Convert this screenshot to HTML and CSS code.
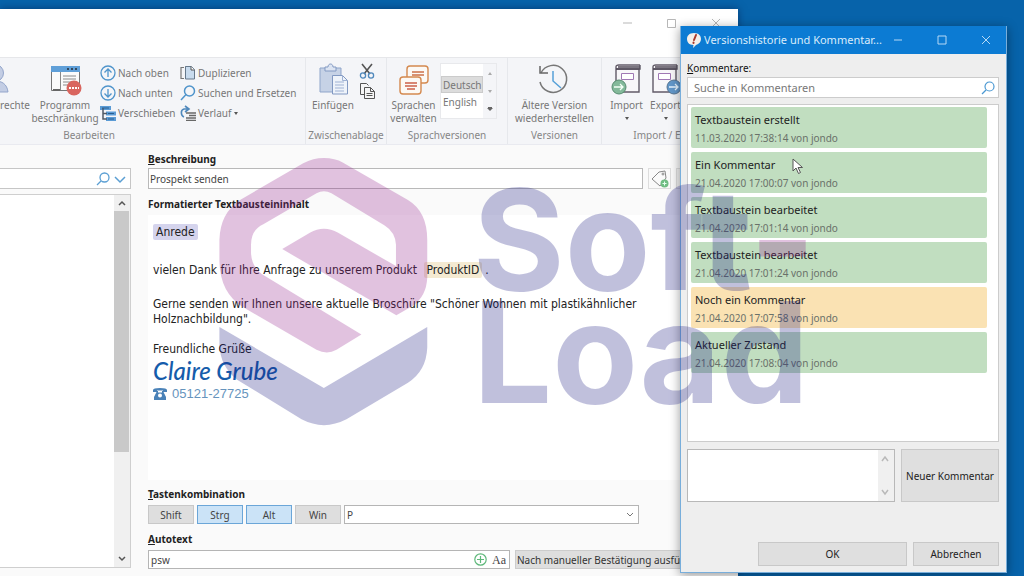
FILE: index.html
```html
<!DOCTYPE html>
<html lang="de">
<head>
<meta charset="utf-8">
<title>Versionshistorie und Kommentare</title>
<link rel="stylesheet" href="styles.css">
</head>
<body>
<main class="desktop">
  <section class="window main-window" aria-label="Textbausteine">
    <header class="main-title">
      <button class="caption-btn" aria-label="Minimieren"><svg width="10" height="10" viewBox="0 0 10 10"><path d="M0 5h9"/></svg></button>
      <button class="caption-btn" aria-label="Maximieren"><svg width="10" height="10" viewBox="0 0 10 10"><path d="M.5 1.500h8v8h-8z"/></svg></button>
      <button class="caption-btn" aria-label="Schließen"><svg width="10" height="10" viewBox="0 0 10 10"><path d="M1 1l8 8M9 1l-8 8"/></svg></button>
    </header>

    <nav class="ribbon" aria-label="Menüband">
      <div class="group group-edit">
        <div class="group-tools tools-end">
          <button class="big-tool rights-tool">
            <svg width="36" height="34" viewBox="0 0 36 34"><g fill="#c3cde4" stroke="#93a5cb"><circle cx="14" cy="10" r="8.500"/><path d="M1 29c1-8 6-11 13-11s12 3 13 11z"/></g></svg>
            <span>rechte</span>
          </button>
          <button class="big-tool program-tool">
            <svg width="34" height="34" viewBox="0 0 34 34"><path d="M3.500 3.500h28v24h-28z" fill="#fbfbfb" stroke="#767676"/><path d="M3 3h29v6H3z" fill="#5f9fd8"/><path d="M19 6h2M23 6h2M27 6h2" stroke="#34495e" stroke-width="2"/><path d="M12.500 9v18M15 13h13M15 16h13M15 19h9M15 22h6" stroke="#8a8a8a"/><path d="M5 27h7" stroke="#666" stroke-width="2"/><circle cx="26" cy="25" r="7.500" fill="#d9655f"/><path d="M21 25h10" stroke="#fff" stroke-width="2" stroke-dasharray="2 1"/></svg>
            <span>Programm<br>beschränkung</span>
          </button>
          <div class="tool-rows rows-move">
            <button class="row-tool"><svg width="16" height="16" viewBox="0 0 16 16" fill="none" stroke="#4f94cb" stroke-width="1.300"><circle cx="8" cy="8" r="7"/><path d="M8 12V4M4.500 7.500L8 4l3.500 3.500"/></svg>Nach oben</button>
            <button class="row-tool"><svg width="16" height="16" viewBox="0 0 16 16" fill="none" stroke="#4f94cb" stroke-width="1.300"><circle cx="8" cy="8" r="7"/><path d="M8 4v8M4.500 8.500L8 12l3.500-3.500"/></svg>Nach unten</button>
            <button class="row-tool"><svg width="16" height="16" viewBox="0 0 16 16"><path d="M0 1h11v4H0zM6 6.500h10v4H6zM6 12h10v4H6z" fill="#5b9bd5"/><path d="M3 3v11h4M3 8.500h4" stroke="#505a66" stroke-width="1.500" fill="none"/><path d="M2 3h7M8 8.500h6M8 14h6" stroke="#295f91"/></svg>Verschieben</button>
          </div>
          <div class="tool-rows rows-copy">
            <button class="row-tool"><svg width="16" height="16" viewBox="0 0 16 16"><path d="M4 2.500H1v11h3M6 1v11" stroke="#777" fill="none" stroke-width="1.200"/><path d="M5.500 1.500h6l3 3v9.500h-9z" fill="#c8dbee" stroke="#66798c"/><path d="M11 1.500V5h3.500" fill="#fff" stroke="#555"/></svg>Duplizieren</button>
            <button class="row-tool"><svg width="16" height="16" viewBox="0 0 16 16" fill="none" stroke="#4f94cb" stroke-width="1.500"><circle cx="9.500" cy="6" r="5"/><path d="M6 9.500L1 15"/></svg>Suchen und Ersetzen</button>
            <button class="row-tool"><svg width="16" height="16" viewBox="0 0 16 16" fill="none"><path d="M4 12C1 11 0 5 4 4h4M5 1l4 3-4 3" stroke="#4f88bc" stroke-width="1.600"/><path d="M6 8h10M9 10.500h7M6 13h10M6 15.300h10" stroke="#686868" stroke-width="1.300"/></svg>Verlauf <i class="drop"></i></button>
          </div>
        </div>
        <span class="group-name edit-name">Bearbeiten</span>
      </div>

      <div class="group group-clip">
        <div class="group-tools">
          <button class="big-tool paste-tool">
            <svg width="34" height="34" viewBox="0 0 34 34"><path d="M4 5h21v24H4z" fill="#c6d2e6" stroke="#8fa5ca"/><path d="M9 8V4h3c0-4 5-4 5 0h3v4z" fill="#dce4f2" stroke="#8299c2"/><path d="M16.500 12.500h10l5 5V31h-15z" fill="#eef3fa" stroke="#8299c2"/><path d="M26.500 12.500v5h5M19 19h9M19 22h9M19 25h9M19 28h9" fill="none" stroke="#9fb2d4"/></svg>
            <span>Einfügen</span>
          </button>
          <div class="clip-side">
            <button class="icon-tool" aria-label="Ausschneiden"><svg width="16" height="17" viewBox="0 0 16 17" fill="none"><path d="M3 1l8 10M13 1L5 11" stroke="#555" stroke-width="1.600"/><circle cx="4" cy="12.500" r="2.600" stroke="#4f88bc" stroke-width="1.300"/><circle cx="12" cy="12.500" r="2.600" stroke="#4f88bc" stroke-width="1.300"/></svg></button>
            <button class="icon-tool" aria-label="Kopieren"><svg width="16" height="16" viewBox="0 0 16 16" fill="#f6f6f6" stroke="#555"><path d="M5 11.500H1.500v-11h6l2 2"/><path d="M5.500 4.500h6l4 4v7h-10zM11.500 4.500v4h4M7.500 10.500h6M7.500 12.500h6"/></svg></button>
          </div>
        </div>
        <span class="group-name">Zwischenablage</span>
      </div>

      <div class="group group-lang">
        <div class="group-tools">
          <button class="big-tool lang-tool">
            <svg width="32" height="34" viewBox="0 0 32 34" fill="#fcf9f5" stroke="#d4894f" stroke-width="1.400"><rect x="9" y="3" width="21" height="17" rx="3"/><path d="M14 9h12M14 12h12" stroke="#cc7048"/><rect x="2" y="14" width="21" height="17" rx="3"/><path d="M7 20h12M7 23h12M9 26h8" stroke="#cc6048"/></svg>
            <span>Sprachen<br>verwalten</span>
          </button>
          <div class="gallery">
            <ul class="languages"><li class="chosen">Deutsch</li><li>English</li></ul>
            <div class="gallery-steps"><i class="step-up"></i><i class="step-down"></i><i class="step-more"></i></div>
          </div>
        </div>
        <span class="group-name">Sprachversionen</span>
      </div>

      <div class="group group-version">
        <div class="group-tools tools-center">
          <button class="big-tool">
            <svg width="34" height="34" viewBox="0 0 34 34" fill="none"><path d="M4 10a13.500 13.500 0 1 1-1 9" stroke="#777" stroke-width="1.500"/><path d="M3 3v7h8" stroke="#666" stroke-width="1.500"/><path d="M16 8v10l8 7" stroke="#55a0d8" stroke-width="1.500"/></svg>
            <span>Ältere Version<br>wiederherstellen</span>
          </button>
        </div>
        <span class="group-name">Versionen</span>
      </div>

      <div class="group group-io">
        <div class="group-tools">
          <button class="big-tool io-tool">
            <svg width="32" height="34" viewBox="0 0 32 34"><path d="M5 6V4q0-2 3-2h21M5 6v23h23V6z" fill="#f8f7f9" stroke="#615b68" stroke-width="1.400"/><path d="M5 6h24V2M7 4h22" stroke="#514b58" fill="none" stroke-width="1.300"/><path d="M10.500 10.500h12v6h-12z" fill="#fff" stroke="#a078b4"/><circle cx="8" cy="24" r="7" fill="#83b99a" stroke="#578c70"/><path d="M3 24h9M9 21l3 3-3 3" stroke="#f4fff6" fill="none" stroke-width="1.300"/></svg>
            <span>Import</span><i class="drop"></i>
          </button>
          <button class="big-tool io-tool">
            <svg width="32" height="34" viewBox="0 0 32 34"><path d="M3 6V4q0-2 3-2h21M3 6v23h23V6z" fill="#f8f7f9" stroke="#615b68" stroke-width="1.400"/><path d="M3 6h24V2M5 4h22" stroke="#514b58" fill="none" stroke-width="1.300"/><path d="M8.500 10.500h12v6h-12z" fill="#fff" stroke="#a078b4"/><circle cx="24" cy="24" r="7" fill="#6297c9" stroke="#587592"/><path d="M19 24h9M25 21l3 3-3 3" stroke="#e8f5ff" fill="none" stroke-width="1.300"/></svg>
            <span>Export</span><i class="drop"></i>
          </button>
        </div>
        <span class="group-name">Import / Export</span>
      </div>
    </nav>

    <div class="workspace">
      <aside class="tree">
        <div class="tree-search">
          <input type="search" aria-label="Textbausteine suchen">
          <svg width="14" height="14" viewBox="0 0 14 14" fill="none" stroke="#5b9fd3" stroke-width="1.300"><circle cx="8.500" cy="5.500" r="4.500"/><path d="M5 9l-4 4"/></svg>
          <svg width="12" height="14" viewBox="0 0 12 14" fill="none" stroke="#5b9fd3" stroke-width="1.500"><path d="M1 5l5 5 5-5"/></svg>
        </div>
        <div class="tree-list">
          <div class="scrollbar">
            <svg width="15" height="16" viewBox="0 0 15 16"><path d="M5 10l3-3 3 3"/></svg>
            <span class="thumb"></span>
            <svg class="scroll-end" width="15" height="16" viewBox="0 0 15 16"><path d="M5 6l3 3 3-3"/></svg>
          </div>
        </div>
      </aside>

      <form class="details">
        <label class="field-label" for="desc"><u>B</u>eschreibung</label>
        <div class="desc-row">
          <input id="desc" class="text-box" type="text" value="Prospekt senden">
          <button type="button" class="tag-btn" aria-label="Schlagwort hinzufügen"><svg width="20" height="18" viewBox="0 0 20 18" fill="none" stroke="#888"><path d="M2 9l7-7 6-1 1 7-6 8z"/><circle cx="13" cy="4" r="1"/><circle cx="14.500" cy="13.500" r="4" fill="#6fbd83" stroke="none"/><path d="M12.500 13.500h4M14.500 11.500v4" stroke="#e8fff0"/></svg></button>
          <button type="button" class="more-btn" aria-label="Schlagwörter"></button>
        </div>
        <span class="field-label content-label">Formatierter Textbausteininhalt</span>
        <article class="editor">
          <p><span class="token token-blue">Anrede</span></p>
          <p class="thanks">vielen Dank für Ihre Anfrage zu unserem Produkt <span class="token token-sand">ProduktID</span>.</p>
          <p class="offer">Gerne senden wir Ihnen unsere aktuelle Broschüre "Schöner Wohnen mit plastikähnlicher Holznachbildung".</p>
          <p>Freundliche Grüße</p>
          <p class="signature">Claire Grube</p>
          <p class="phone"><svg width="14" height="12" viewBox="0 0 14 12"><path d="M0 4V2q0-2 7-2t7 2v2h-4V2.500H4V4z" fill="#4a82b8"/><path d="M4 3h1v1.500h4V3h1l3 6v3H1V9z" fill="#4a82b8"/><circle cx="7" cy="7.500" r="2" fill="#fff"/></svg>05121-27725</p>
        </article>
        <span class="field-label"><u>T</u>astenkombination</span>
        <div class="key-row">
          <button type="button" class="key">Shift</button>
          <button type="button" class="key key-on" aria-pressed="true">Strg</button>
          <button type="button" class="key key-on" aria-pressed="true">Alt</button>
          <button type="button" class="key">Win</button>
          <select class="key-select" aria-label="Taste"><option>P</option></select>
        </div>
        <label class="field-label auto-label" for="auto"><u>A</u>utotext</label>
        <div class="auto-row">
          <div class="auto-box">
            <input id="auto" type="text" value="psw">
            <svg width="13" height="13" viewBox="0 0 13 13" fill="none" stroke="#5fb87b" stroke-width="1.200"><circle cx="6.500" cy="6.500" r="5.700"/><path d="M3 6.500h7M6.500 3v7"/></svg>
            <span class="case">Aa</span>
          </div>
          <button type="button" class="confirm">Nach manueller Bestätigung ausführen</button>
        </div>
      </form>
    </div>
  </section>

  <section class="window dialog" role="dialog" aria-labelledby="dialog-title">
    <header class="dialog-title">
      <svg width="16" height="16" viewBox="0 0 16 16"><path d="M8 1c5 0 7 3 7 6s-2 5-5 6l-3 3 .500-3C3 13 1 10 1 7s2-6 7-6z" fill="#f6efe8"/><path d="M10 3L8 8M7.500 10.500v.5" stroke="#a8382a" stroke-width="2" stroke-linecap="round"/></svg>
      <h1 id="dialog-title">Versionshistorie und Kommentar...</h1>
      <button class="caption-btn" aria-label="Minimieren"><svg width="10" height="10" viewBox="0 0 10 10"><path d="M1 5h8"/></svg></button>
      <button class="caption-btn" aria-label="Maximieren"><svg width="10" height="10" viewBox="0 0 10 10"><path d="M1 1h8v8H1z"/></svg></button>
      <button class="caption-btn" aria-label="Schließen"><svg width="10" height="10" viewBox="0 0 10 10"><path d="M1 1l8 8M9 1l-8 8"/></svg></button>
    </header>
    <div class="dialog-body">
      <label class="comments-label" for="comment-search"><u>K</u>ommentare:</label>
      <div class="comment-search">
        <input id="comment-search" type="text" placeholder="Suche in Kommentaren">
        <svg width="14" height="14" viewBox="0 0 14 14" fill="none" stroke="#4a98d2" stroke-width="1.200"><circle cx="8.500" cy="5.500" r="4.500"/><path d="M5 9l-4 4"/></svg>
      </div>
      <ul class="comments">
        <li class="comment"><b>Textbaustein erstellt</b><span>11.03.2020 17:38:14 von jondo</span></li>
        <li class="comment"><b>Ein Kommentar</b><span>21.04.2020 17:00:07 von jondo</span></li>
        <li class="comment"><b>Textbaustein bearbeitet</b><span>21.04.2020 17:01:14 von jondo</span></li>
        <li class="comment"><b>Textbaustein bearbeitet</b><span>21.04.2020 17:01:24 von jondo</span></li>
        <li class="comment comment-note"><b>Noch ein Kommentar</b><span>21.04.2020 17:07:58 von jondo</span></li>
        <li class="comment"><b>Aktueller Zustand</b><span>21.04.2020 17:08:04 von jondo</span></li>
      </ul>
      <div class="new-row">
        <div class="new-box">
          <textarea aria-label="Neuer Kommentar"></textarea>
          <div class="new-scroll">
            <svg width="15" height="16" viewBox="0 0 15 16"><path d="M4 11l3-4 3 4"/></svg>
            <svg width="15" height="16" viewBox="0 0 15 16"><path d="M4 5l3 4 3-4"/></svg>
          </div>
        </div>
        <button class="push new-btn">Neuer Kommentar</button>
      </div>
      <footer class="dialog-footer">
        <button class="push ok-btn">OK</button>
        <button class="push cancel-btn">Abbrechen</button>
      </footer>
    </div>
  </section>

  <div class="watermark">
    <svg class="emblem" width="209" height="268" viewBox="57 39 628 806"><path fill="#94218d" d="M372 39Q405 39 430 53L625 165Q683 200 683 285V400Q680 455 640 483L590 512 247 313 330 264Q372 240 415 264L589 364V300Q587 262 555 242L395 145Q372 133 350 145L190 238Q153 255 153 300V325Q155 365 185 388L485 570 410 616Q382 632 350 616L130 488Q60 445 58 350V285Q60 205 120 165L310 55Q340 39 372 39Z"/><path fill="#191982" d="M58 547L372 731 683 547V610Q680 680 625 715L440 825Q372 860 305 825L110 705Q60 665 58 600Z"/></svg>
    <p class="wordmark">Soft<span>-</span><br>Load</p>
  </div>
  <svg class="pointer" width="12" height="17" viewBox="0 0 12 17"><path d="M1 1v12l3-3 2.500 5.500 2-1L6 9.500h4.500z" fill="#fff" stroke="#555"/></svg>
</main>
</body>
</html>
```
FILE: styles.css
```css
* { box-sizing: border-box; }
body { margin: 0; font: 10px/14px "Noto Sans", "Open Sans", sans-serif; color: #222; }
button, input, select, textarea { font: inherit; color: inherit; margin: 0; padding: 0; border: 0; background: none; border-radius: 0; outline: 0; }
ul, p, h1 { margin: 0; padding: 0; list-style: none; }
svg { display: block; flex: none; }
i { font-style: normal; }

.desktop { position: relative; height: 100vh; overflow: hidden; background: #0763aa; }
.window { position: absolute; display: flex; flex-direction: column; overflow: hidden; }
.main-window { left: 0; right: 286px; top: 9px; bottom: 0; background: #fafafa; box-shadow: 0 0 8px rgba(0, 20, 60, .5); }
.dialog { right: 17px; width: 327px; top: 26px; bottom: 3px; background: #eee; border: 1px solid #78aedb; border-top: 0; box-shadow: 0 2px 10px rgba(0, 0, 0, .4); }

/* Title bars */
.main-title { display: flex; justify-content: flex-end; height: 48px; background: #fff; }
.caption-btn { display: flex; align-items: center; justify-content: center; width: 44px; height: 28px; }
.caption-btn svg { fill: none; stroke: #b7b7b7; }
.dialog-title { display: flex; align-items: center; flex: none; height: 28px; margin: 0 -1px; padding-left: 6px; gap: 2px; background: #0c7bd3; color: #d9ecfb; }
.dialog-title h1 { flex: 1; min-width: 0; font-size: 11px; font-weight: 400; white-space: nowrap; }
.dialog-title .caption-btn { width: 42px; }
.dialog-title .caption-btn svg { stroke: #b5d9f5; }

/* Ribbon */
.ribbon { display: flex; flex: none; height: 88px; background: #f4f5f8; border-top: 1px solid #e6e7ea; border-bottom: 1px solid #e9eaf0; color: #777; }
.group { display: flex; flex: none; flex-direction: column; padding-top: 5px; border-right: 1px solid #e6e8ec; white-space: nowrap; }
.group-tools { display: flex; flex: 1; }
.tools-end { justify-content: flex-end; }
.tools-center { justify-content: center; }
.group-name { height: 16px; text-align: center; color: #868686; }
.group-edit { width: 306px; }
.edit-name { padding-right: 127px; }
.group-clip { width: 81px; }
.group-clip .group-tools { padding-left: 2px; }
.group-lang { width: 121px; }
.group-version { width: 94px; }
.group-io { width: 136px; }
.big-tool { display: flex; flex-direction: column; align-items: center; flex: none; line-height: 13px; }
.big-tool > span { margin-top: 2px; }
.rights-tool { width: 30px; }
.rights-tool svg { margin-left: -32px; }
.program-tool { width: 70px; }
.tool-rows { display: flex; flex-direction: column; flex: none; }
.rows-move { width: 80px; }
.rows-copy { width: 125px; }
.row-tool { display: flex; align-items: center; gap: 2px; height: 20px; }
.drop { border: 2px solid transparent; border-top: 3px solid #555; border-bottom: 0; margin: 1px; }
.paste-tool { width: 50px; }
.clip-side { display: flex; flex-direction: column; gap: 3px; }
.icon-tool { padding-left: 1px; }
.lang-tool { width: 53px; }
.gallery { display: flex; height: 56px; border: 1px solid #e8e9ec; background: #fff; }
.languages { width: 42px; padding-top: 12px; }
.languages li { height: 17px; line-height: 16px; padding-left: 1px; border: 1px solid transparent; }
.languages .chosen { background: #dcdcdc; border-color: #cbcbcb; }
.gallery-steps { display: flex; flex-direction: column; align-items: center; justify-content: space-around; width: 13px; background: #f4f5f8; }
.step-up, .step-down, .step-more { border: 2px solid transparent; }
.step-up { border-bottom: 3px solid #aaa; border-top: 0; }
.step-down { border-top: 3px solid #aaa; border-bottom: 0; }
.step-more { border-width: 3px; border-top-color: #666; border-bottom: 0; box-shadow: 0 -2px 0 -1px #666; }
.io-tool { width: 39px; }
.io-tool:first-child { margin-left: 5px; }
.io-tool .drop { margin-top: 5px; }

/* Workspace */
.workspace { display: flex; flex: 1; gap: 17px; min-height: 0; }
.tree { display: flex; flex-direction: column; gap: 5px; width: 131px; padding: 23px 0 8px; flex: none; }
.tree-search { display: flex; align-items: center; gap: 4px; height: 21px; padding-right: 4px; border: 1px solid #c6c6c6; border-left: 0; background: #fff; flex: none; }
.tree-search input { flex: 1; min-width: 0; }
.tree-list { display: flex; justify-content: flex-end; flex: 1; border: 1px solid #cfcfcf; border-left: 0; background: #fff; }
.scrollbar { display: flex; flex-direction: column; width: 16px; background: #f0f0f0; }
.scrollbar svg { fill: none; stroke: #555; stroke-width: 1.500; }
.thumb { flex: 0 1 241px; width: 15px; background: #c9c9c9; }
.scroll-end { margin-top: auto; }

.details { display: flex; flex-direction: column; flex: 1; min-width: 0; padding: 7px 0 7px; }
.field-label { font-weight: 700; height: 16px; line-height: 14px; flex: none; }
.desc-row { display: flex; gap: 5px; height: 21px; flex: none; }
.text-box { flex: 1; min-width: 0; padding: 0 1px; border: 1px solid #b9b9b9; background: #fff; color: #444; }
.tag-btn { display: flex; align-items: center; justify-content: center; width: 23px; border: 1px solid #ddd; }
.more-btn { width: 62px; border: 1px solid #ddd; background: #f2f2f2; }
.content-label { margin-top: 8px; height: 18px; }
.editor { flex: 1; min-height: 0; overflow: hidden; padding: 10px 80px 0 5px; background: #fff; font-family: "DejaVu Sans Condensed", "DejaVu Sans", sans-serif; font-size: 12px; line-height: 15px; white-space: nowrap; }
.token { padding: 1px 3px; border-radius: 2px; }
.token-blue { background: #d5d4ed; }
.token-sand { margin: 0 3px; background: #f4ead2; }
.thanks { margin-top: 23px; }
.offer { margin: 19px 0 15px; white-space: normal; }
.signature { font: italic 500 24px/28px "Lato", sans-serif; color: #155cab; }
.phone { display: flex; align-items: center; gap: 5px; font: 13px/18px "Liberation Sans", sans-serif; color: #6694bd; }
.editor + .field-label { margin-top: 7px; height: 18px; }
.key-row { display: flex; gap: 3px; height: 19px; flex: none; padding-right: 99px; color: #444; }
.key { width: 46px; border: 1px solid #c8c8c8; background: #dedede; }
.key-on { background: #cbe3f7; border-color: #6ba6d8; }
.key-select { flex: 1; min-width: 0; padding: 0 2px; border: 1px solid #b5b5b5; appearance: none; background: #fff url("data:image/svg+xml,%3Csvg xmlns='http://www.w3.org/2000/svg' width='8' height='6'%3E%3Cpath d='M1 1l3 3 3-3' fill='none' stroke='%23777'/%3E%3C/svg%3E") no-repeat right 4px center; }
.auto-label { margin-top: 8px; height: 18px; }
.auto-row { display: flex; gap: 5px; height: 19px; flex: none; color: #444; }
.auto-box { display: flex; align-items: center; flex: 1; gap: 5px; padding: 0 3px 0 2px; border: 1px solid #b5b5b5; background: #fff; }
.auto-box input { flex: 1; min-width: 0; }
.case { font: 12px/16px "Liberation Serif", serif; }
.confirm { width: 223px; padding-left: 1px; border: 1px solid #ccc; background: #dedede; text-align: left; color: #333; white-space: nowrap; overflow: hidden; }

/* Comment dialog */
.dialog-body { display: flex; flex-direction: column; flex: 1; min-height: 0; padding: 7px 7px 6px 6px; }
.comments-label { height: 16px; line-height: 15px; color: #111; }
.comment-search { display: flex; align-items: center; height: 21px; flex: none; padding: 0 3px 0 6px; border: 1px solid #ccc; background: #fff; font-size: 11px; }
.comment-search input { flex: 1; min-width: 0; }
.comment-search input::placeholder { color: #777; opacity: 1; }
.comments { display: flex; flex-direction: column; gap: 4px; flex: 1; min-height: 0; margin: 6px 0 7px; padding: 2px 11px 0 3px; border: 1px solid #ccc; background: #fff; }
.comment { display: flex; flex-direction: column; gap: 4px; height: 41px; padding: 5px 4px 0; border-radius: 2px; background: #c1dec0; }
.comment-note { background: #fae2b3; }
.comment b { font-size: 11px; font-weight: 400; line-height: 15px; color: #222; }
.comment span { color: #6a716a; }
.new-row { display: flex; gap: 6px; height: 53px; flex: none; }
.new-box { display: flex; flex: 1; border: 1px solid #b8b8b8; background: #fff; }
.new-box textarea { flex: 1; min-width: 0; resize: none; }
.new-scroll { display: flex; flex-direction: column; justify-content: space-between; width: 16px; background: #f0f0f0; }
.new-scroll svg { fill: none; stroke: #b9b9b9; stroke-width: 1.500; }
.push { border: 1px solid #c8c8c8; background: #dfdfdf; color: #222; }
.new-btn { width: 98px; white-space: nowrap; }
.dialog-footer { display: flex; justify-content: flex-end; gap: 6px; height: 24px; flex: none; margin-top: 40px; }
.ok-btn { width: 149px; }
.cancel-btn { width: 86px; }

/* Overlay */
.watermark { position: absolute; inset: 158px auto auto 219px; display: flex; gap: 45px; opacity: .27; pointer-events: none; }
.wordmark { font: 700 140px/113px "Inter", "Roboto", sans-serif; color: #191982; white-space: nowrap; margin-top: 25px; }
.wordmark span { color: #94218d; }
.pointer { position: absolute; left: 792px; top: 158px; pointer-events: none; }
```
